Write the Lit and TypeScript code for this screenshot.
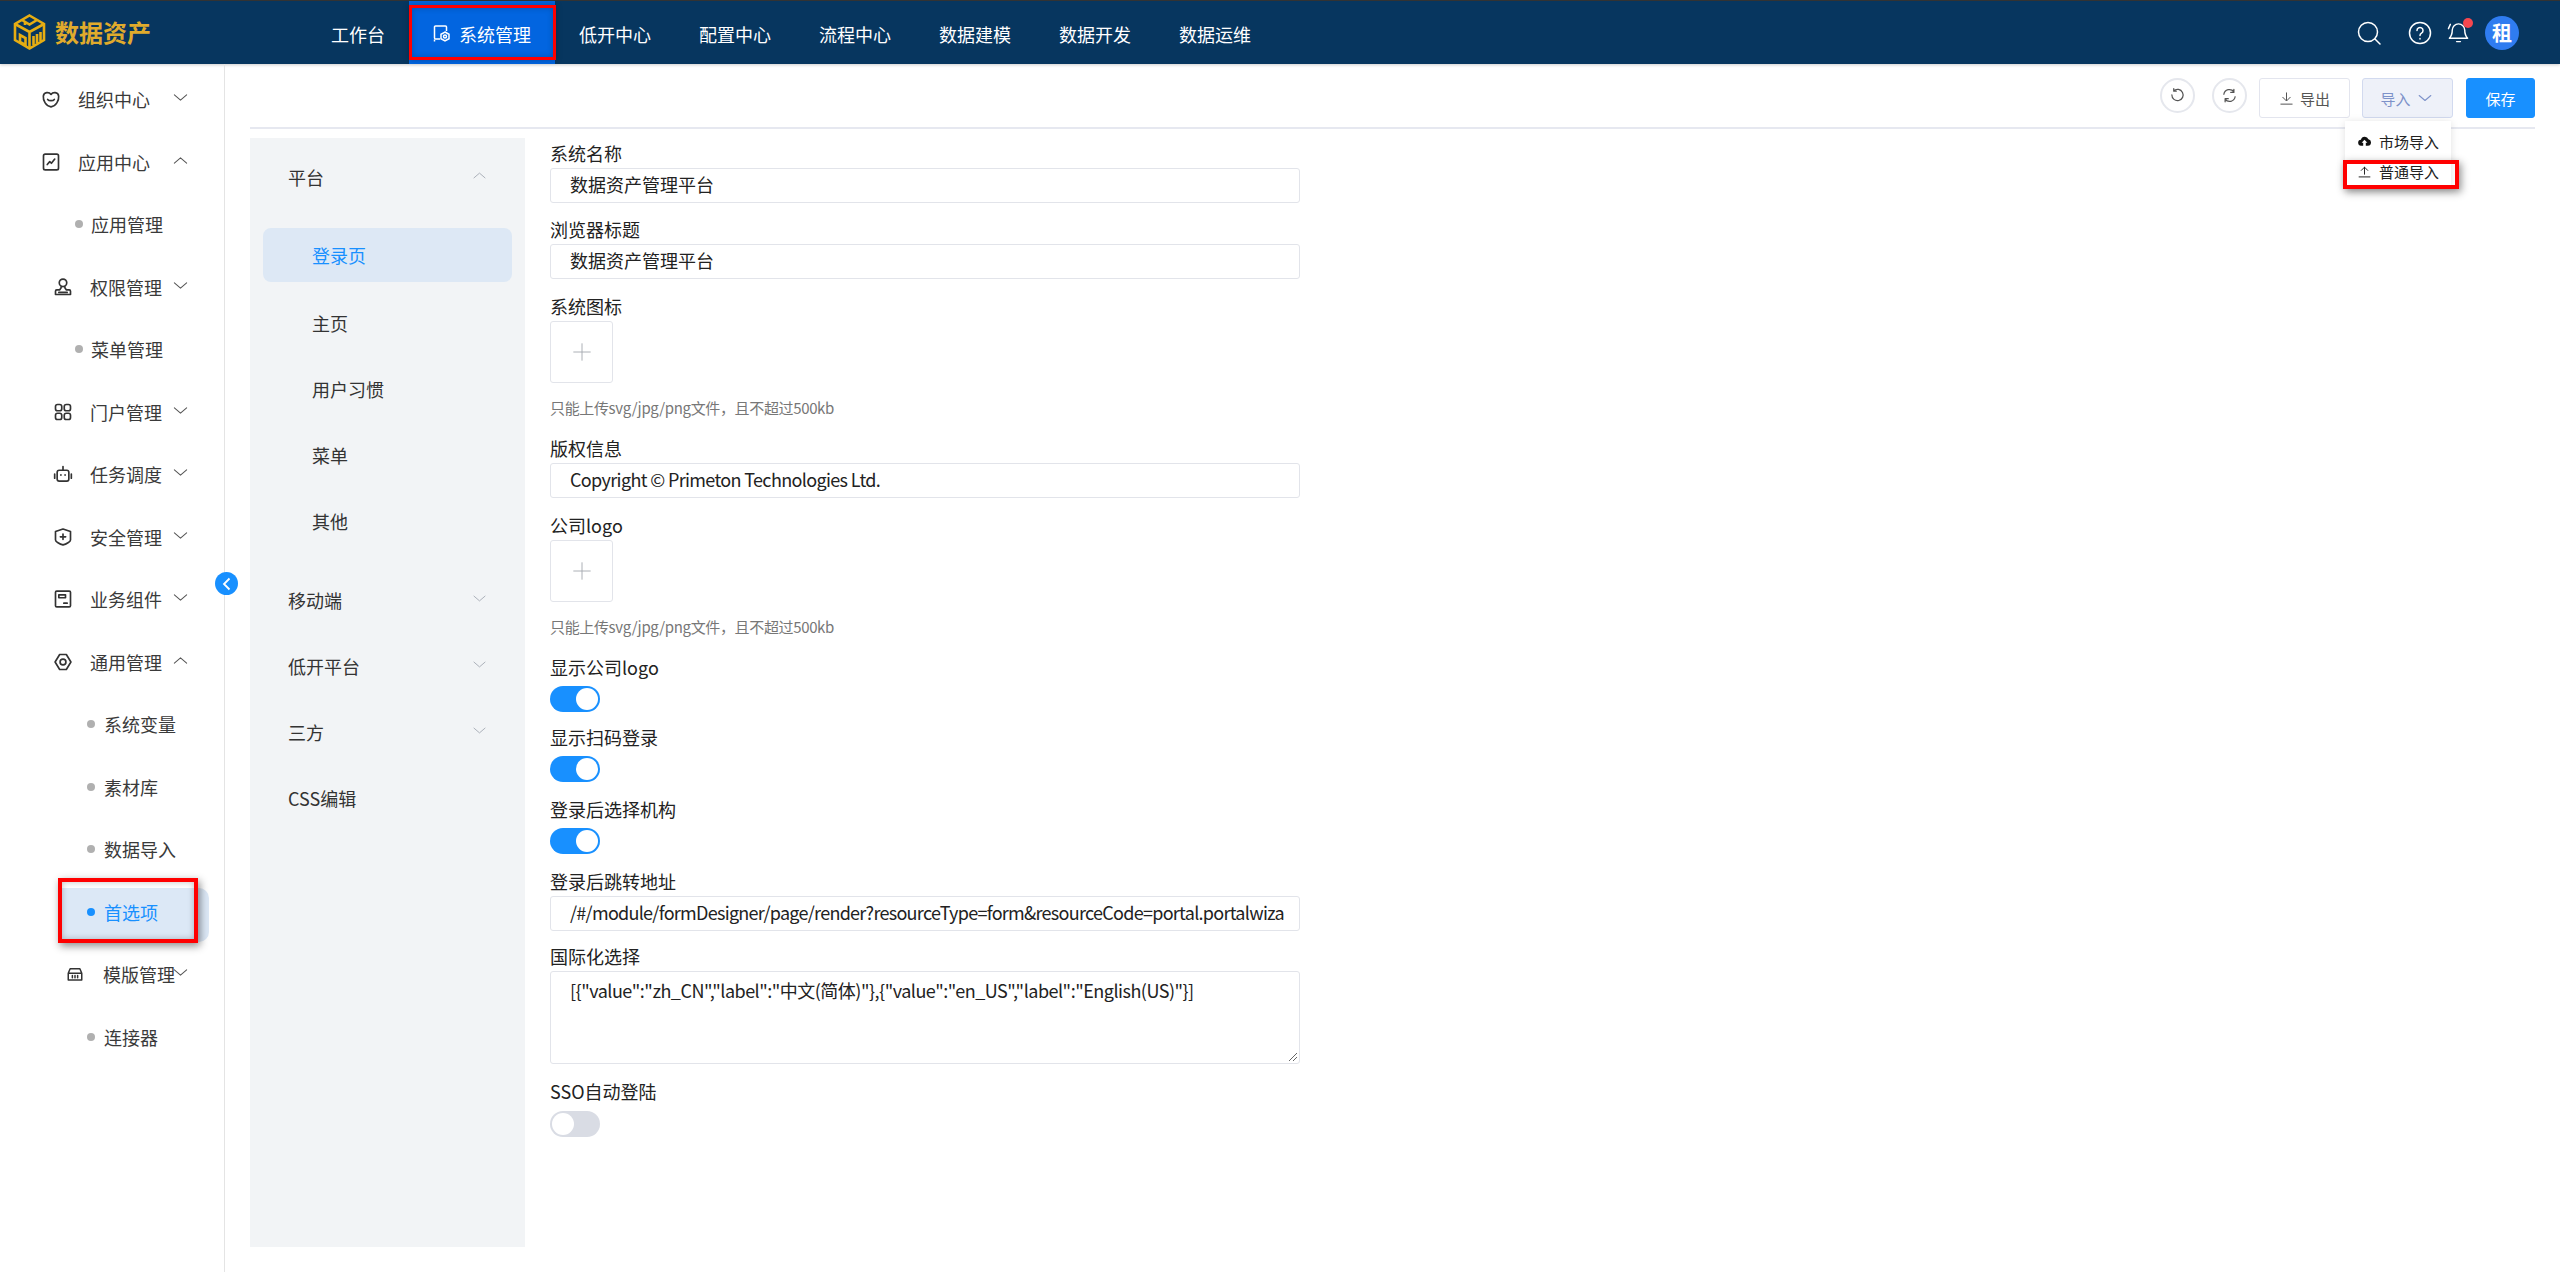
import { LitElement, html, css, svg } from "lit";
import { customElement } from "lit/decorators.js";

const ic = (size: number, body: unknown, sw = 1.6) => html`<svg width=${size} height=${size} viewBox="0 0 24 24" fill="none" stroke="currentColor" stroke-width=${sw} stroke-linecap="round" stroke-linejoin="round">${body}</svg>`;
const chevDown = svg`<path d="M5 9l7 6 7-6"/>`;
const chevUp = svg`<path d="M5 15l7-6 7 6"/>`;

const icons: Record<string, unknown> = {
  heart: svg`<path d="M12 6.500C10 3.500 3.500 3 2.800 8.500 2.300 14 6 20.500 12 21.500c6-1 9.700-7.500 9.200-13C20.500 3 14 3.500 12 6.500z" stroke-width="2"/><path d="M8 12.500c1.500 2 6.500 2 8 0" stroke-width="2"/>`,
  chart: svg`<rect x="3" y="2.500" width="18" height="19" rx="2" stroke-width="2"/><path d="M7.500 15l3-3.500 2 2 4-5" stroke-width="2"/>`,
  user: svg`<circle cx="12" cy="7" r="4.500" stroke-width="2"/><path d="M10 11.500c0 2-1 3-2 4H4.500c-1 0-1.500.5-1.500 1.500v4h18v-4c0-1-.5-1.500-1.500-1.500H16c-1-1-2-2-2-4M7 18.500h10" stroke-width="2"/>`,
  grid: svg`<rect x="3" y="3" width="7.500" height="7.500" rx="2.500" stroke-width="2"/><rect x="13.500" y="3" width="7.500" height="7.500" rx="2.500" stroke-width="2"/><rect x="3" y="13.500" width="7.500" height="7.500" rx="2.500" stroke-width="2"/><rect x="13.500" y="13.500" width="7.500" height="7.500" rx="2.500" stroke-width="2"/>`,
  robot: svg`<rect x="5" y="7.500" width="14" height="13" rx="2.500" stroke-width="2"/><path d="M12 7.500V3M2 12v5M22 12v5M9.500 13v.5M14.500 13v.5" stroke-width="2"/>`,
  shield: svg`<path d="M12 2.500l9 3v10c0 2-5 5-9 6-4-1-9-4-9-6v-10z" stroke-width="2"/><path d="M12 8.500v6.500M8.800 11.800h6.400" stroke-width="2"/>`,
  panel: svg`<rect x="3" y="2.500" width="18" height="19" rx="1.500" stroke-width="2"/><rect x="7" y="7" width="8" height="3.500" stroke-width="2"/><path d="M13 17h4" stroke-width="2"/>`,
  hex: svg`<path d="M8 3h8l5.500 9-5.500 9H8l-5.500-9z" stroke-width="2"/><circle cx="12" cy="12" r="3.500" stroke-width="2"/>`,
  box: svg`<path d="M3 11l2.500-6h13L21 11v9H3zM3 11h18M8.500 14v3M12 14v3M15.500 14v3" stroke-width="2"/>`,
};

type Row = { t: string; lvl: 1 | 2 | 3; icon?: string; chev?: "d" | "u"; active?: boolean };
const rows: Row[] = [
  { t: "组织中心", lvl: 1, icon: "heart", chev: "d" },
  { t: "应用中心", lvl: 1, icon: "chart", chev: "u" },
  { t: "应用管理", lvl: 2 },
  { t: "权限管理", lvl: 2, icon: "user", chev: "d" },
  { t: "菜单管理", lvl: 2 },
  { t: "门户管理", lvl: 2, icon: "grid", chev: "d" },
  { t: "任务调度", lvl: 2, icon: "robot", chev: "d" },
  { t: "安全管理", lvl: 2, icon: "shield", chev: "d" },
  { t: "业务组件", lvl: 2, icon: "panel", chev: "d" },
  { t: "通用管理", lvl: 2, icon: "hex", chev: "u" },
  { t: "系统变量", lvl: 3 },
  { t: "素材库", lvl: 3 },
  { t: "数据导入", lvl: 3 },
  { t: "首选项", lvl: 3, active: true },
  { t: "模版管理", lvl: 3, icon: "box", chev: "d" },
  { t: "连接器", lvl: 3 },
];

const nav = ["工作台", "系统管理", "低开中心", "配置中心", "流程中心", "数据建模", "数据开发", "数据运维"];

@customElement("app-root")
export class AppRoot extends LitElement {
  static styles = css`
    :host { display: block; width: 2560px; height: 1272px; overflow: hidden; position: relative; background: #fff; color: #333;
      font-family: "Noto Sans CJK SC", "Noto Sans", sans-serif; font-size: 18px; }
    * { box-sizing: border-box; }
    .top { height: 64px; background: #07365f; border-top: 1px solid #333; display: flex; align-items: stretch; position: relative; color: #fff; box-shadow: 0 1px 3px rgba(0,0,0,.2); }
    .logo { width: 307px; display: flex; align-items: center; padding-left: 13px; gap: 9px; margin-top: -1px; }
    .logo b { font-size: 24px; color: #e0ab2c; font-weight: 700; line-height: 1; }
    .nav { display: flex; height: 63px; }
    .nav div { padding: 0 24px; display: flex; align-items: center; gap: 8px; line-height: 1; padding-top: 3px; }
    .nav .on { background: #0265e0; }
    .right { margin-left: auto; display: flex; align-items: center; padding-right: 41px; }
    .right .s { margin-right: 27px; display: flex; }
    .right .h { margin-right: 15px; display: flex; }
    .bell { position: relative; margin-right: 15px; display: flex; }
    .dot { position: absolute; left: 16px; top: -3px; width: 10px; height: 10px; background: #f5474f; border-radius: 50%; }
    .ava { width: 34px; height: 34px; border-radius: 50%; background: #2f7cf0; display: flex; align-items: center; justify-content: center; font-weight: 700; font-size: 20px; }
    .body { display: flex; height: 1208px; }
    .side { width: 225px; flex: none; border-right: 1px solid #e4e4e4; padding-top: 4px; position: relative; }
    .row { height: 62.5px; display: flex; align-items: center; position: relative; color: #3a3a3a; }
    .row .txt { line-height: 1; }
    .l1 { padding-left: 39px; }
    .l2 { padding-left: 51px; }
    .l3 { padding-left: 63px; }
    .row .ico { width: 23px; height: 23px; display: flex; align-items: center; justify-content: center; margin-right: 16px; color: #333; }
    .row .bul { width: 8px; height: 8px; border-radius: 50%; background: #b0b0b0; margin: 0 8px 0 24px; }
    .l3 .ico { margin-left: 1px; margin-right: 17px; width: 22px; height: 22px; }
    .l3 .bul { margin: 0 9px 0 24px; }
    .chev { position: absolute; left: 170px; top: 19px; color: #555; display: flex; }
    .row.act { color: #1890ff; }
    .row.act .bul { background: #1890ff; }
    .actbg { position: absolute; left: 58px; right: 15px; top: 7px; height: 54px; background: #dce8f6; border-radius: 0 10px 10px 0; z-index: 0; }
    .row > * { z-index: 1; }
    .collapse { position: absolute; left: 215px; top: 508px; width: 23px; height: 23px; border-radius: 50%; background: #1890ff; color: #fff; display: flex; align-items: center; justify-content: center; z-index: 5; }
    .main { flex: 1; padding: 14px 25px 0 25px; display: flex; flex-direction: column; min-width: 0; }
    .bar { height: 51px; border-bottom: 2px solid #e6e8f0; display: flex; justify-content: flex-end; align-items: flex-start; font-size: 15px; }
    .circ { width: 35px; height: 35px; border-radius: 50%; border: 2px solid #e5e7ed; display: flex; align-items: center; justify-content: center; color: #555; margin-right: 17px; }
    .circ.last { margin-right: 12px; }
    .btn { height: 40px; width: 91px; border: 1.500px solid #e3e5ee; border-radius: 3px; display: flex; align-items: center; justify-content: center; gap: 6px; color: #555; line-height: 1; }
    .btn.imp { background: #eef1f9; border-color: #d2daef; color: #7d92c9; margin-left: 12px; gap: 4px; }
    .btn.save { width: 69px; margin-left: 13px; background: #1890ff; border-color: #1890ff; color: #fff; }
    .content { display: flex; margin-top: 9px; flex: 1; margin-bottom: 25px; }
    .sub { width: 275px; flex: none; background: #f2f4f6; padding-top: 6px; position: relative; font-size: 18px; color: #333; }
    .sub .g { height: 66px; display: flex; align-items: center; padding-left: 38px; position: relative; line-height: 1; }
    .sub .g svg { position: absolute; right: 36px; top: 22px; color: #a8adb6; }
    .sub .gap { margin-top: 13px; }
    .sub .i { height: 66px; display: flex; align-items: center; padding-left: 62px; line-height: 1; }
    .sub .sel { height: 54px; margin: 18px 13px 8px; padding-left: 49px; background: #dde8f5; border-radius: 8px; color: #1890ff; }
    .form { padding-left: 25px; width: 775px; color: #222; }
    .lb { height: 30px; line-height: 30px; white-space: nowrap; margin-top: 12px; color: #222; }
    .lb.f { margin-top: 0; }
    .lb.m10 { margin-top: 10px; }
    .lb.m11 { margin-top: 11px; }
    .inp { height: 35px; border: 1.500px solid #e2e4ea; border-radius: 3px; padding-left: 19px; line-height: 31px; white-space: nowrap; overflow: hidden; color: #222; }
    .inp.lat { letter-spacing: -0.65px; }
    .inp.url { letter-spacing: -0.72px; }
    .ta { height: 93px; border: 1.500px solid #e2e4ea; border-radius: 3px; padding: 3px 19px; line-height: 30px; position: relative; white-space: nowrap; letter-spacing: -0.5px; }
    .ta svg { position: absolute; right: 1px; bottom: 1px; }
    .up { width: 63px; height: 62px; border: 1.500px solid #e2e4ea; border-radius: 3px; display: flex; align-items: center; justify-content: center; color: #a3a7ae; }
    .hint { font-size: 15px; letter-spacing: -0.35px; color: #777; height: 20px; line-height: 20px; margin-top: 15px; margin-bottom: 15px; white-space: nowrap; }
    .sw { width: 50px; height: 26px; border-radius: 13px; background: #1890ff; position: relative; margin-top: 4px; }
    .sw::after { content: ""; position: absolute; right: 2px; top: 2px; width: 22px; height: 22px; border-radius: 50%; background: #fff; }
    .sw.off { background: #d9dce4; margin-top: 5px; }
    .sw.off::after { right: auto; left: 2px; }
    .menu { position: absolute; left: 2345px; top: 121px; width: 106px; height: 66px; background: #fff; box-shadow: 0 1px 8px rgba(0,0,0,.12); font-size: 15px; color: #222; z-index: 6; padding-top: 5px; }
    .menu div { height: 30px; display: flex; align-items: center; padding-left: 13px; gap: 8px; line-height: 1; color: #222; }
    .red { position: absolute; border: 4px solid #f00; box-shadow: 2px 3px 8px rgba(0,0,0,.45), inset 0 0 6px rgba(0,0,0,.25); z-index: 8; pointer-events: none; }
    .r1 { left: 409px; top: 5px; width: 147px; height: 55px; border-width: 3px; box-shadow: 0 0 6px rgba(0,0,0,.25), inset 0 0 6px rgba(0,0,0,.2); }
    .r2 { left: 2343px; top: 160px; width: 116px; height: 29px; box-shadow: 2px 3px 8px rgba(0,0,0,.45); }
    .r3 { left: 58px; top: 878px; width: 140px; height: 65px; }
  `;

  private logo() {
    return html`<svg width="33" height="36" viewBox="0 0 33 36" fill="none" stroke="#e6ad12" stroke-width="2.600">
      <path d="M16.500 1.500L31 10v16l-14.500 8.500L2 26V10z"/>
      <path d="M2 10l14.500 8 14.500-8M16.500 18v16.500"/>
      <path d="M9 6l7.500 4.500L24 6M12 8v3M7 21v7l5.500 3V24zM20.500 31v-9M24 29v-9M27.500 27v-9"/>
    </svg>`;
  }

  render() {
    const plus = ic(18, svg`<path d="M12 1v22M1 12h22"/>`, 1.200);
    return html`
      <div class="top">
        <div class="logo">${this.logo()}<b>数据资产</b></div>
        <div class="nav">
          ${nav.map((n, i) => i === 1
            ? html`<div class="on"><svg width="18" height="18" viewBox="0 0 18 18" fill="none" stroke="#fff" stroke-width="1.500"><path d="M7 14H2.500a1 1 0 0 1-1-1V2a1 1 0 0 1 1-1h10a1 1 0 0 1 1 1v4"/><path d="M1.500 14.500v2"/><path d="M12 7l4 2.300v4.400L12 16l-4-2.300V9.300z"/><circle cx="12" cy="11.500" r="1.500"/></svg><span>${n}</span></div>`
            : html`<div>${n}</div>`)}
        </div>
        <div class="right">
          <span class="s">${ic(24, svg`<circle cx="11" cy="11" r="9.500"/><path d="M18 18l5 5"/>`, 1.500)}</span>
          <span class="h">${ic(24, svg`<circle cx="12" cy="12" r="10.500"/><path d="M9 9.500a3 3 0 1 1 4.500 2.600c-1 .6-1.500 1.200-1.500 2.400M12 17.500v.5"/>`, 1.500)}</span>
          <span class="bell">${ic(23, svg`<path d="M12 3a6.500 6.500 0 0 0-6.500 6.500c0 5-1.500 7-3 8.500h19c-1.500-1.500-3-3.500-3-8.500A6.500 6.500 0 0 0 12 3zM10 21.500h4M3.500 3.500L1.500 8"/>`, 1.500)}<span class="dot"></span></span>
          <div class="ava">租</div>
        </div>
      </div>
      <div class="body">
        <div class="side">
          ${rows.map((r) => html`
            <div class="row l${r.lvl} ${r.active ? "act" : ""}">
              ${r.active ? html`<div class="actbg"></div>` : ""}
              ${r.icon ? html`<span class="ico">${ic(r.lvl === 3 ? 18 : 20, icons[r.icon])}</span>` : html`<span class="bul"></span>`}
              <span class="txt">${r.t}</span>
              ${r.chev ? html`<span class="chev">${ic(21, r.chev === "d" ? chevDown : chevUp, 1.200)}</span>` : ""}
            </div>`)}
          <div class="collapse"><svg width="12" height="14" viewBox="0 0 12 14" fill="none" stroke="#fff" stroke-width="1.800"><path d="M8.500 1.500L3 7l5.500 5.500"/></svg></div>
        </div>
        <div class="main">
          <div class="bar">
            <div class="circ">${ic(15, svg`<path d="M6 4.500a9 9 0 1 1-3 6.500M6 1v4h4" />`, 2)}</div>
            <div class="circ last">${ic(15, svg`<path d="M3 10a9 9 0 0 1 16-4M21 14a9 9 0 0 1-16 4M19 2v5h-5M5 22v-5h5"/>`, 2)}</div>
            <div class="btn">${ic(15, svg`<path d="M12 3v12M6 10l6 6 6-6M3 21h18"/>`, 1.600)}<span>导出</span></div>
            <div class="btn imp"><span>导入</span>${ic(20, chevDown, 1.300)}</div>
            <div class="btn save">保存</div>
          </div>
          <div class="content">
            <div class="sub">
              <div class="g">平台${ic(19, chevUp, 1.200)}</div>
              <div class="i sel">登录页</div>
              <div class="i">主页</div>
              <div class="i">用户习惯</div>
              <div class="i">菜单</div>
              <div class="i">其他</div>
              <div class="g gap">移动端${ic(19, chevDown, 1.200)}</div>
              <div class="g">低开平台${ic(19, chevDown, 1.200)}</div>
              <div class="g">三方${ic(19, chevDown, 1.200)}</div>
              <div class="g">CSS编辑</div>
            </div>
            <div class="form">
              <div class="lb f">系统名称</div>
              <div class="inp">数据资产管理平台</div>
              <div class="lb m11">浏览器标题</div>
              <div class="inp">数据资产管理平台</div>
              <div class="lb">系统图标</div>
              <div class="up">${plus}</div>
              <div class="hint">只能上传svg/jpg/png文件，且不超过500kb</div>
              <div class="lb f">版权信息</div>
              <div class="inp lat">Copyright © Primeton Technologies Ltd.</div>
              <div class="lb">公司logo</div>
              <div class="up">${plus}</div>
              <div class="hint">只能上传svg/jpg/png文件，且不超过500kb</div>
              <div class="lb f">显示公司logo</div>
              <div class="sw"></div>
              <div class="lb m10">显示扫码登录</div>
              <div class="sw"></div>
              <div class="lb">登录后选择机构</div>
              <div class="sw"></div>
              <div class="lb">登录后跳转地址</div>
              <div class="inp url">/#/module/formDesigner/page/render?resourceType=form&resourceCode=portal.portalwiza</div>
              <div class="lb m10">国际化选择</div>
              <div class="ta">[{"value":"zh_CN","label":"中文(简体)"},{"value":"en_US","label":"English(US)"}]
                <svg width="10" height="10" viewBox="0 0 10 10" stroke="#666" stroke-width="1"><path d="M1 9l8-8M5 9l4-4"/></svg>
              </div>
              <div class="lb">SSO自动登陆</div>
              <div class="sw off"></div>
            </div>
          </div>
        </div>
      </div>
      <div class="menu">
        <div><svg width="13" height="12" viewBox="0 0 15 13"><path fill="#111" d="M4 12a3.500 3.500 0 0 1-.6-7A4.500 4.500 0 0 1 12 4.500 3.800 3.800 0 0 1 11.500 12H9V8.500h1.800L7.500 5 4.200 8.500H6V12z"/></svg><span>市场导入</span></div>
        <div>${ic(13, svg`<path d="M12 17V4M6 10l6-6 6 6M2 22h20"/>`, 1.800)}<span>普通导入</span></div>
      </div>
      <div class="red r1"></div>
      <div class="red r2"></div>
      <div class="red r3"></div>
    `;
  }
}
